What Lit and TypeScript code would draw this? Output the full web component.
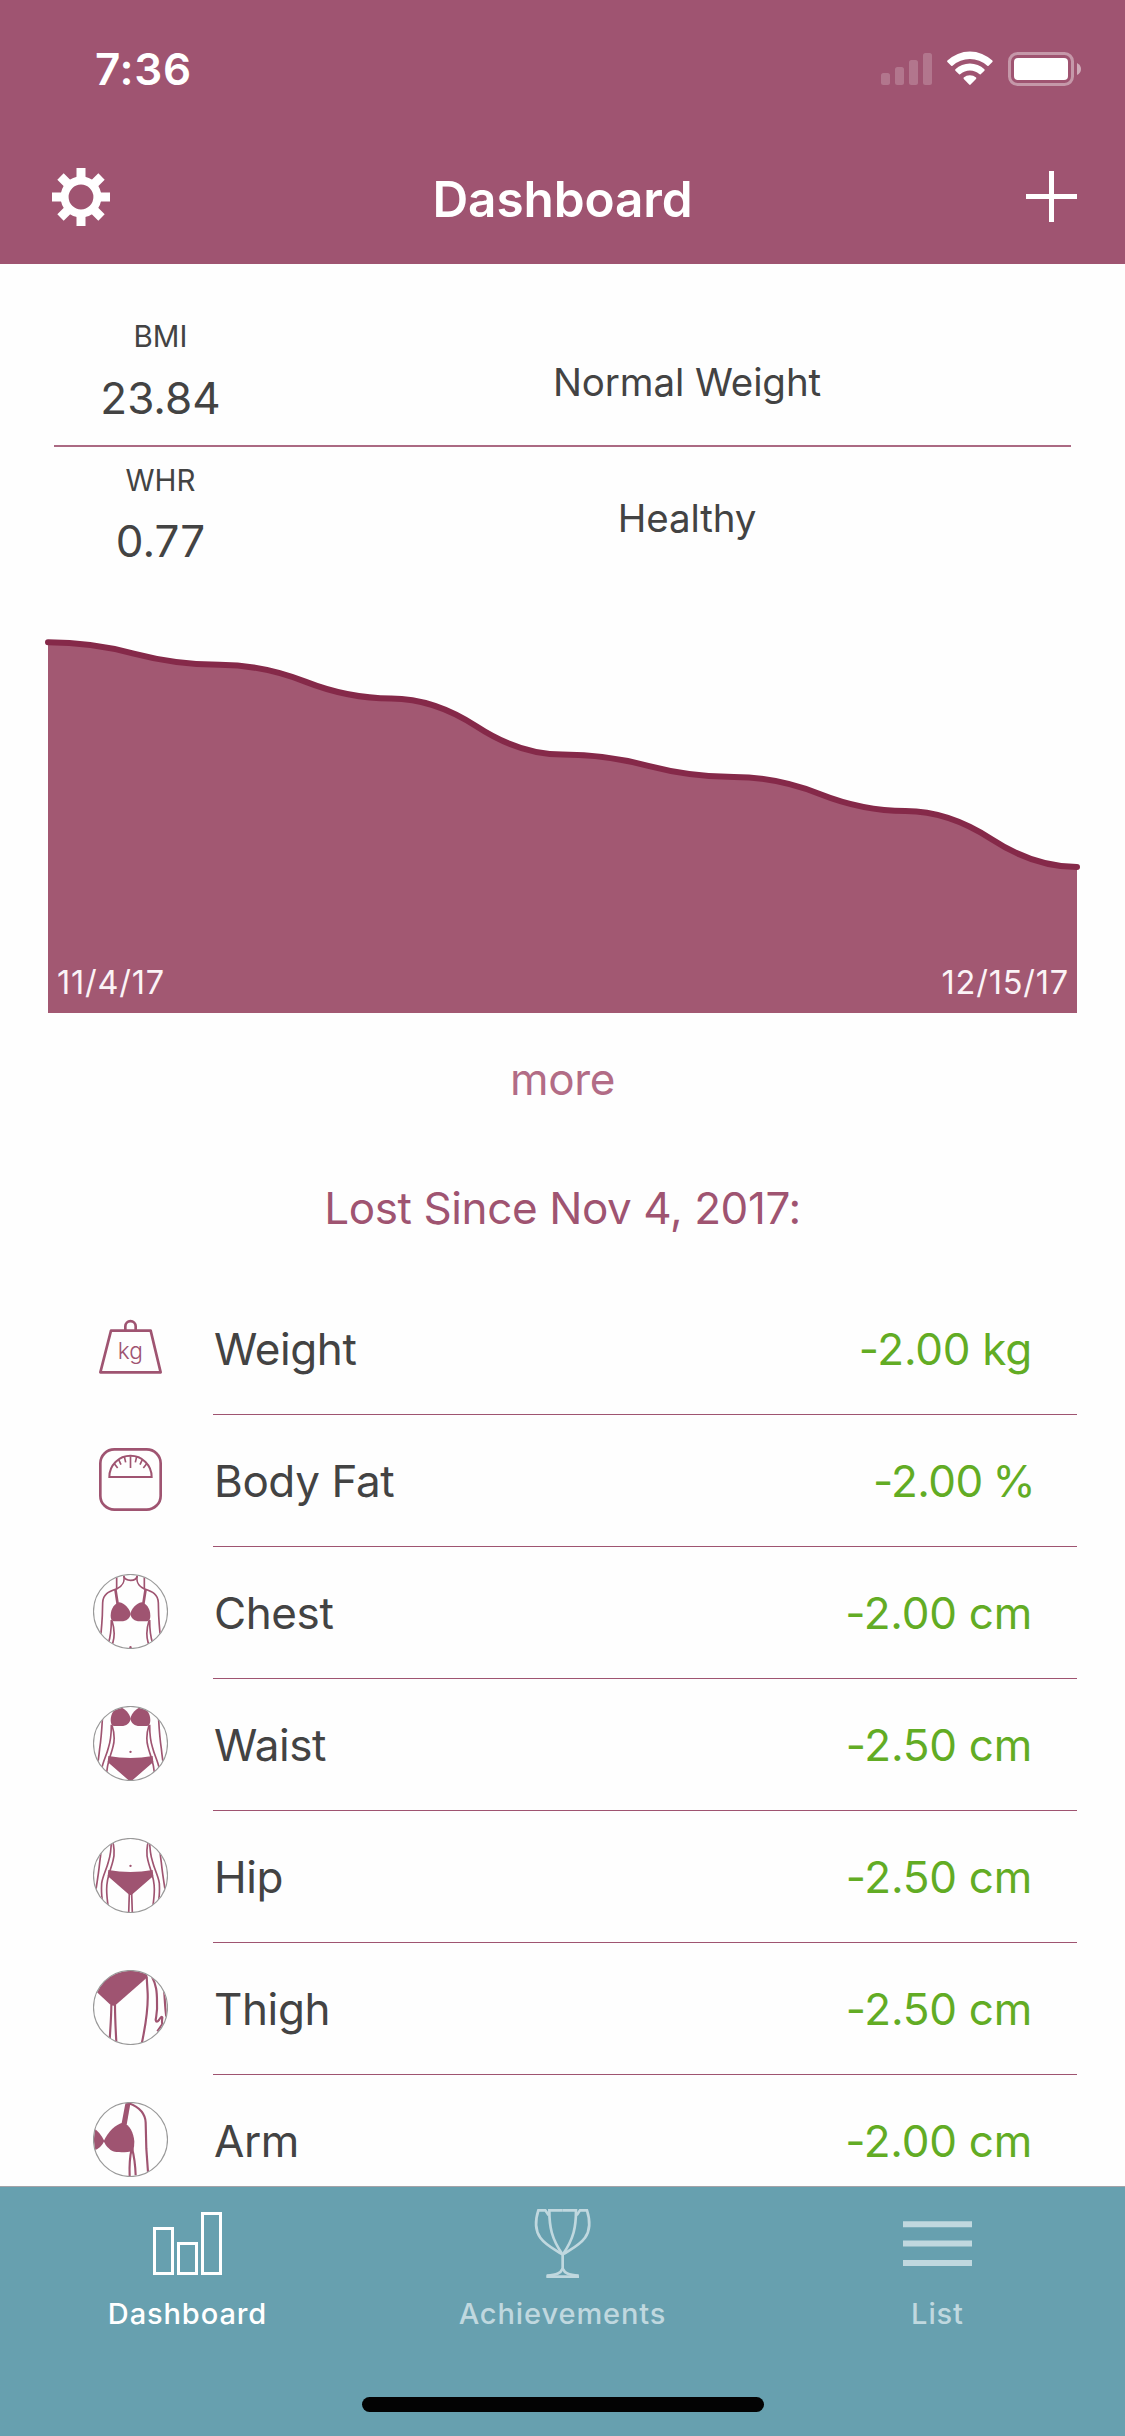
import { LitElement, html, css, svg } from "lit";
import { customElement, property } from "lit/decorators.js";

type Metric = { label: string; value: string; icon: string };

const METRICS: Metric[] = [
  { label: "Weight", value: "-2.00 kg", icon: "weight" },
  { label: "Body Fat", value: "-2.00 %", icon: "fat" },
  { label: "Chest", value: "-2.00 cm", icon: "chest" },
  { label: "Waist", value: "-2.50 cm", icon: "waist" },
  { label: "Hip", value: "-2.50 cm", icon: "hip" },
  { label: "Thigh", value: "-2.50 cm", icon: "thigh" },
  { label: "Arm", value: "-2.00 cm", icon: "arm" },
];

/* One side of the torso; mirrored for the other side. */
const half = svg`
  <path class="ln" d="M92 4C96 20 90 36 72 44C46 53 30 60 29 86L28 124C26 160 23 190 20 210C17 240 13 265 9 290" />
  <path class="ln" d="M71 6V46" />
  <path class="strap" d="M67 45L74 90" />
  <path class="solid" d="M53 125C53 103 66 88 79 85C95 88 110 104 113 120C111 133 100 142 85 142H62Q53 140 53 125Z" />
  <path class="ln" d="M55 138C55 165 52 190 46 208C40 232 29 250 26 272C25 290 25 305 28 322" />
  <path class="ln" d="M57 140C65 165 64 190 60 204C55 228 41 250 41 290C41 312 43 325 46 345" />
  <path class="ln" d="M109 302L107 362" />
`;

const torso = (shift: number) => svg`
  <g clip-path="url(#disc)"><g transform="translate(0 ${-shift})">
    ${half}<g transform="translate(225 0) scale(-1 1)">${half}</g>
    <path class="ln" d="M92 6Q96 19 113 19Q130 19 133 6" />
    <circle class="solid" cx="112.5" cy="219.5" r="3.5" />
    <path class="solid" d="M46 232Q112 244 179 232L181 250L119 304Q112.5 310 106 304L44 250Z" />
  </g></g>`;

const ring = svg`<circle class="ring" cx="112.5" cy="112.5" r="111" />`;
const disc = svg`<defs><clipPath id="disc"><circle cx="112.5" cy="112.5" r="110" /></clipPath></defs>`;

const ICONS: Record<string, unknown> = {
  weight: svg`
    <path class="w8" d="M54 62H173L203 187H22Z" />
    <path class="w8" d="M97 60V49A15.5 15.5 0 0 1 128 49V60" />
    <text class="unit" x="112" y="148">kg</text>`,
  fat: svg`
    <rect class="w8" x="22" y="22" width="181" height="181" rx="42" />
    <path class="w6" d="M49 105A63.5 63.5 0 0 1 176 105Z" />
    <path class="w5" d="M112.5 43V78M94 44L98 61M77 53L84 68M64 65L74 78M131 44L127 61M148 53L141 68M161 65L151 78" />`,
  chest: svg`${disc}${torso(0)}${ring}`,
  waist: svg`${disc}${torso(82)}${ring}`,
  hip: svg`${disc}${torso(136)}${ring}`,
  thigh: svg`${disc}<g clip-path="url(#disc)">
      <path class="solid" d="M8 63L53 105Q61 110 68 105L163 22V-5H0Z" />
      <path class="ln2" d="M55 104C55 140 52 175 50 210" />
      <path class="ln2" d="M66 104C66 140 68 180 70 216" />
      <path class="ln2" d="M161 20L164 70C166 120 158 165 146 222" />
      <path class="ln2" d="M176 18C190 45 192 65 192 95C194 125 190 135 188 150Q190 160 198 150Q206 136 208 143Q206 158 208 162L193 184" />
      <path class="ln2" d="M212 50C216 80 215 110 220 140" />
    </g>${ring}`,
  arm: svg`${disc}<g clip-path="url(#disc)">
      <path class="solid" d="M98 0H113L101 68H85Z" />
      <path class="solid" d="M32 118C44 90 68 66 90 62C110 68 122 92 124 118Q124 135 121 146C102 152 74 152 60 148Q42 140 32 118Z" />
      <path class="solid" d="M0 77Q20 88 34 117Q25 138 0 148Z" />
      <path class="ln2" d="M108 4C145 18 157 38 158 62L160 140L165 210" />
      <path class="ln2" d="M116 140Q108 175 110 222" />
      <path class="ln2" d="M117 138C124 165 127 190 128 220" />
    </g>${ring}`,
};

/* One side of the trophy: outer handle, cup wall and foot. */
const trophyHalf = svg`
  <path d="M110 31H70C70 80 76 115 110 164" />
  <path d="M68 46L58 31H37C27 62 28 92 43 113C58 134 82 146 107 162" />
  <path d="M110 206C104 219 94 225 62 227" />
`;

@customElement("metric-row")
class MetricRow extends LitElement {
  @property({ attribute: false }) metric!: Metric;

  static styles = css`
    :host { display: flex; height: 132px; padding: 0 48px 0 93px; box-sizing: border-box; }
    .icon { width: 75px; height: 75px; margin: 27px 45px 0 0; flex: none; }
    .body { flex: 1; display: flex; align-items: center; justify-content: space-between;
      border-bottom: 1px solid #9f5471; padding: 0 45px 0 1px; font-size: 44px; line-height: 56px; letter-spacing: -0.4px; }
    .value { color: #62ac24; letter-spacing: -0.25px; }
    .percent { letter-spacing: -0.6px; word-spacing: -2px; margin-right: -3px; }
    .ln, .ln2, .strap, .w8, .w6, .w5 { fill: none; stroke: #9f5471; }
    .ln { stroke-width: 5; }
    .ln2 { stroke-width: 6.5; }
    .strap { stroke-width: 8; }
    .w8 { stroke-width: 8; stroke-linejoin: round; }
    .w6 { stroke-width: 6; }
    .w5 { stroke-width: 5; }
    .solid { fill: #9f5471; }
    .ring { fill: none; stroke: #999; stroke-width: 3.5; }
    .unit { fill: #9f5471; font-size: 68px; font-weight: 300; text-anchor: middle; }
  `;

  render() {
    const unit = this.metric.value.endsWith("%") ? "value percent" : "value";
    return html`
      <svg class="icon" viewBox="0 0 225 225">${ICONS[this.metric.icon]}</svg>
      <div class="body"><span>${this.metric.label}</span><span class=${unit}>${this.metric.value}</span></div>`;
  }
}

@customElement("weight-chart")
class WeightChart extends LitElement {
  static styles = css`
    :host { display: grid; margin: 0 48px; }
    .plot { grid-area: 1 / 1; width: 1029px; height: 374px; overflow: visible; display: block; }
    .area { fill: #a25872; }
    .line { fill: none; stroke: #852949; stroke-width: 6; stroke-linecap: round; }
    .dates { grid-area: 1 / 1; align-self: end; display: flex; justify-content: space-between;
      padding: 0 8px 8px 9px; font-size: 32.5px; line-height: 44px; letter-spacing: 0.8px; color: #fbf3f6; }
  `;

  render() {
    const ys = [3.3, 25.8, 59.5, 115.6, 138, 172, 228];
    const step = 1029 / 6;
    let curve = `M0 ${ys[0]}`;
    for (let i = 1; i < ys.length; i++) {
      const x0 = (i - 1) * step;
      const mid = (ys[i - 1] + ys[i]) / 2;
      curve += `Q${x0 + step / 4} ${ys[i - 1]} ${x0 + step / 2} ${mid}`;
      curve += `Q${x0 + (step * 3) / 4} ${ys[i]} ${x0 + step} ${ys[i]}`;
    }
    return html`
      <svg class="plot" viewBox="0 0 1029 374">
        <path class="area" d="${curve}V374H0Z" />
        <path class="line" d="${curve}" />
      </svg>
      <div class="dates"><span>11/4/17</span><span>12/15/17</span></div>`;
  }
}

@customElement("app-root")
class AppRoot extends LitElement {
  static styles = css`
    :host { display: flex; flex-direction: column; height: 2436px; width: 1125px; overflow: hidden;
      background: #fefefe; color: #434343; font-family: Inter, "Liberation Sans", sans-serif; }
    svg { display: block; }
    .top { flex: none; height: 264px; background: #9f5471; color: #fff; display: flex; flex-direction: column; }
    .status { height: 132px; display: flex; justify-content: space-between; padding: 0 43px 0 95px; }
    .time { font-size: 44px; font-weight: 600; line-height: 56px; padding-top: 41px; letter-spacing: 0.7px; }
    .signals { width: 202px; height: 36px; margin-top: 51px; }
    .nav { height: 132px; display: grid; grid-template-columns: 58px 1fr 58px; padding: 0 48px 0 52px; }
    .gear { width: 58px; height: 58px; margin-top: 36px; }
    .plus { width: 51px; height: 51px; margin-top: 39px; justify-self: end; }
    .title { margin: 0 4px 0 0; text-align: center; font-size: 49.5px; font-weight: 600; line-height: 60px;
      padding-top: 37px; letter-spacing: -0.1px; }
    .content { flex: 1; min-height: 0; overflow: hidden; display: flex; flex-direction: column; }
    .stat { display: grid; grid-template-columns: 213px 1fr; column-gap: 36px; margin: 0 54px;
      flex: none; box-sizing: border-box; text-align: center; }
    .first { height: 183px; padding-top: 52px; border-bottom: 2px solid #ab6a83; }
    .second { height: 192px; padding-top: 13px; }
    .name { font-size: 29.5px; line-height: 40px; }
    .num { font-size: 44px; line-height: 56px; margin-top: 14px; }
    .second .num { margin-top: 13px; }
    .verdict { font-size: 38.5px; line-height: 50px; letter-spacing: -0.1px; }
    .first .verdict { padding-top: 41px; }
    .second .verdict { padding-top: 33px; }
    .more { margin-top: 38px; text-align: center; font-size: 44px; line-height: 56px; color: #b26c86; letter-spacing: -0.4px; }
    .since { margin: 73px 0 47px; text-align: center; font-size: 44px; font-weight: 400; line-height: 56px;
      color: #9f5471; letter-spacing: -0.4px; }
    metric-row, weight-chart { flex: none; }
    .tabs { flex: none; height: 250px; box-sizing: border-box; border-top: 1px solid #a3a3a8; background: #67a0af;
      display: grid; grid-template-columns: repeat(3, 1fr); grid-template-rows: 210px 15px; justify-items: center; }
    .tab { display: flex; flex-direction: column; align-items: center; color: #c0d8df;
      font-size: 29px; font-weight: 500; line-height: 36px; letter-spacing: 0.9px; }
    .on { color: #fff; }
    .glyph { width: 75px; height: 75px; margin: 18px 0 16px; fill: none; stroke: currentColor; stroke-width: 3; }
    .bars { fill: currentColor; stroke: none; }
    .trophy { stroke-width: 8; }
    .home { grid-column: 1 / -1; width: 402px; height: 15px; border-radius: 8px; background: #030303; }
  `;

  render() {
    return html`
      <header class="top">
        <div class="status">
          <span class="time">7:36</span>
          <svg class="signals" viewBox="880 51 202 36" fill="#fff">
            <g opacity=".2">
              <rect x="881" y="73" width="9" height="12" rx="2.5" />
              <rect x="895" y="67" width="9" height="18" rx="2.5" />
              <rect x="909" y="60" width="9" height="25" rx="2.5" />
              <rect x="923" y="53" width="9" height="32" rx="2.5" />
            </g>
            <path d="M947.4 60.6A32.5 32.5 0 0 1 992.4 60.6Q993 61.4 992.4 62L988.6 65.8Q988 66.3 987.3 65.7A26 26 0 0 0 952.5 65.7Q951.8 66.3 951.2 65.8L947.4 62Q946.8 61.4 947.4 60.6Z" />
            <path d="M955.4 69.3A21 21 0 0 1 984.4 69.3Q985 70 984.4 70.7L980.7 74.2Q980 74.7 979.3 74.1A14 14 0 0 0 960.5 74.1Q959.8 74.7 959.1 74.2L955.4 70.7Q954.8 70 955.4 69.3Z" />
            <path d="M963.7 77.6A9.6 9.6 0 0 1 976.1 77.6Q976.6 78.3 976 79L970.6 84.6Q969.9 85.2 969.2 84.6L963.8 79Q963.2 78.3 963.7 77.6Z" />
            <rect x="1009.5" y="53.5" width="63" height="31" rx="8" fill="none" stroke="#fff" stroke-width="3" opacity=".4" />
            <rect x="1014" y="58" width="54" height="22" rx="4" />
            <path d="M1077 63Q1081 65 1081 69T1077 75Z" opacity=".5" />
          </svg>
        </div>
        <div class="nav">
          <svg class="gear" viewBox="-29 -29 58 58" stroke="#fff" fill="none">
            <circle r="16.4" stroke-width="8" />
            <path stroke-width="9" d="M0-29V-18M0 29V18M-29 0H-18M29 0H18" />
            <path stroke-width="9" transform="rotate(45)" d="M0-29V-18M0 29V18M-29 0H-18M29 0H18" />
          </svg>
          <h1 class="title">Dashboard</h1>
          <svg class="plus" viewBox="0 0 51 51" stroke="#fff" stroke-width="5"><path d="M25.5 0V51M0 25.5H51" /></svg>
        </div>
      </header>
      <main class="content">
        <section class="stat first">
          <div><div class="name">BMI</div><div class="num">23.84</div></div>
          <div class="verdict">Normal Weight</div>
        </section>
        <section class="stat second">
          <div><div class="name">WHR</div><div class="num">0.77</div></div>
          <div class="verdict">Healthy</div>
        </section>
        <weight-chart></weight-chart>
        <div class="more">more</div>
        <h2 class="since">Lost Since Nov 4, 2017:</h2>
        ${METRICS.map((m) => html`<metric-row .metric=${m}></metric-row>`)}
      </main>
      <nav class="tabs">
        <div class="tab on">
          <svg class="glyph" viewBox="150 2205 75 75"><path d="M154.5 2228.5H172.5V2273.5H154.5ZM178.5 2243.5H196.5V2273.5H178.5ZM202.5 2213.5H220.5V2273.5H202.5Z" /></svg>
          <span>Dashboard</span>
        </div>
        <div class="tab">
          <svg class="glyph trophy" viewBox="-3 15 225 225">
            ${trophyHalf}<g transform="translate(220 0) scale(-1 1)">${trophyHalf}</g>
            <path d="M110 162V210M61 230H159" />
          </svg>
          <span>Achievements</span>
        </div>
        <div class="tab">
          <svg class="glyph bars" viewBox="900 2205 75 75"><path d="M903 2221.3H972V2227.3H903ZM903 2240.5H972V2246.5H903ZM903 2260H972V2266H903Z" /></svg>
          <span>List</span>
        </div>
        <div class="home"></div>
      </nav>`;
  }
}
